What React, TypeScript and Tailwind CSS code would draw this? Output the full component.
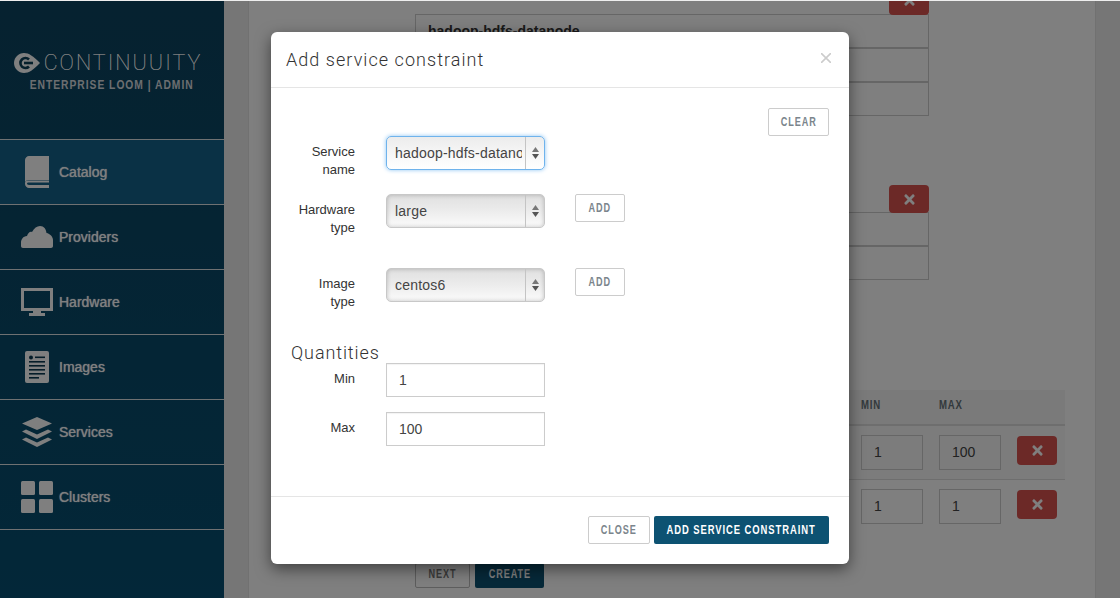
import React from "react";
import { FaTimes } from "react-icons/fa";

const sans = "font-['Liberation_Sans',Arial,sans-serif]";
const narrow = "font-['Liberation_Sans',Arial,sans-serif] font-bold";

const Nar = ({ children, cls = "scale-x-[0.76]" }: { children: React.ReactNode; cls?: string }) => (
  <span className={`inline-block whitespace-nowrap shrink-0 ${cls}`}>{children}</span>
);

const Book = () => (
  <svg width="24" height="32" viewBox="0 0 24 32" fill="#fff">
    <path d="M4 0H24V24H4C2 24 0 25 0 27V4C0 2 2 0 4 0Z" />
    <path d="M0 27C0 25 2 24.5 4 24.5H24V26.5H4C2.5 26.5 2 27 2 27.5S2.5 29 4 29H24V32H4C2 32 0 30 0 28Z" />
  </svg>
);
const Cloud = () => (
  <svg width="32" height="22" viewBox="0 0 32 22" fill="#fff">
    <path d="M2 22C0.8 22 0 21 0 20V16C0 14 2 10 6 10C7 7 9 5 11 6C13 2 16 0 19 0C23 0 25 3 25.5 7C29 7.5 32 11 32 14V20C32 21 31 22 30 22Z" />
  </svg>
);
const Monitor = () => (
  <svg width="32" height="28" viewBox="0 0 32 28" fill="#fff">
    <path fillRule="evenodd" d="M0 0H32V23H0ZM3 3V20H29V3Z" />
    <path d="M12 23H20V25H24V28H8V25H12Z" />
  </svg>
);
const Doc = () => (
  <svg width="24" height="32" viewBox="0 0 24 32">
    <rect width="24" height="32" rx="2" fill="#fff" />
    <g fill="#0a3a52">
      <circle cx="6" cy="6.5" r="2" />
      <rect x="10" y="5.5" width="10" height="1.6" />
      <rect x="4" y="10" width="16" height="1.6" />
      <rect x="4" y="14" width="16" height="1.6" />
      <rect x="4" y="18" width="16" height="1.6" />
      <rect x="4" y="22" width="16" height="1.6" />
      <rect x="4" y="26" width="10" height="1.6" />
    </g>
  </svg>
);
const Layers = () => (
  <svg width="30" height="30" viewBox="0 0 30 30" fill="#fff">
    <path d="M15 0L30 6.500L15 13L0 6.500Z" />
    <path d="M4 12.500L15 17.500L26 12.500L30 14.500L15 22L0 14.500Z" />
    <path d="M4 20.500L15 25.500L26 20.500L30 22.500L15 30L0 22.500Z" />
  </svg>
);
const Grid = () => (
  <svg width="32" height="32" viewBox="0 0 32 32" fill="#fff">
    <rect width="14" height="14" rx="1.5" />
    <rect x="18" width="14" height="14" rx="1.5" />
    <rect y="18" width="14" height="14" rx="1.5" />
    <rect x="18" y="18" width="14" height="14" rx="1.5" />
  </svg>
);
const Logo = () => (
  <svg width="26" height="20" viewBox="0 0 26 20">
    <path fill="#fff" d="M10 0C15 0 19 3 26 10C19 17 15 20 10 20C4.500 20 0 15.500 0 10S4.500 0 10 0Z" />
    <path fill="none" stroke="#0c4058" strokeWidth="2.600" d="M15 6.500A5 5 0 1 0 15 13.500" />
    <path stroke="#0c4058" strokeWidth="2.600" d="M10 10H19" />
  </svg>
);

const nav: [string, React.ReactNode, boolean][] = [
  ["Catalog", <Book />, true],
  ["Providers", <Cloud />, false],
  ["Hardware", <Monitor />, false],
  ["Images", <Doc />, false],
  ["Services", <Layers />, false],
  ["Clusters", <Grid />, false],
];

function Sidebar() {
  return (
    <aside className="w-[224px] shrink-0 flex flex-col bg-gradient-to-b from-[#0c4460] to-[#064f72]">
      <div className="h-[138px] flex flex-col items-center pt-[51px]">
        <div className="flex items-center gap-[4px] pr-[8px] h-[22px]">
          <Logo />
          <span className="font-['Roboto',sans-serif] font-thin text-[21.500px] leading-[22px] tracking-[2px] text-white [text-shadow:0_0_0.6px_#fff]">CONTINUUITY</span>
        </div>
        <div className={`${narrow} mt-[1px] w-full flex justify-center text-[13px] leading-[20px] tracking-[1.250px] text-[#d9dde0]`}>
          <Nar cls="scale-x-[0.79]">ENTERPRISE LOOM | ADMIN</Nar>
        </div>
      </div>
      <nav className="border-t border-[#dfe3e5]">
        {nav.map(([label, icon, active]) => (
          <div key={label} className={`h-[65px] flex items-center border-b border-[#dfe3e5] ${active ? "bg-[#14628a]" : ""}`}>
            <div className="w-[59px] pl-[21px] pr-[6px] flex justify-center shrink-0 box-border">{icon}</div>
            <span className={`${sans} text-[14px] font-normal text-white [text-shadow:0_0_1px_#fff]`}>{label}</span>
          </div>
        ))}
      </nav>
    </aside>
  );
}

const DelBtn = ({ cls = "h-[29px]" }: { cls?: string }) => (
  <div className={`w-[40px] rounded-[4px] bg-[#d9534f] flex items-center justify-center text-white text-[15px] ${cls}`}>
    <FaTimes />
  </div>
);

const BoxRow = ({ children }: { children?: React.ReactNode }) => (
  <div className={`${sans} h-[34px] border border-[#ccc] pl-[12px] text-[14px] font-bold leading-[32px] text-[#333]`}>{children}</div>
);

const SmallInput = ({ value }: { value: string }) => (
  <div className={`${sans} w-[62px] h-[35px] border border-[#ccc] pl-[12px] text-[14px] leading-[33px] text-[#444]`}>{value}</div>
);

function TableRow({ min, max, cls }: { min: string; max: string; cls: string }) {
  return (
    <div className={`flex justify-end gap-[16px] pr-[8px] ${cls}`}>
      <SmallInput value={min} />
      <SmallInput value={max} />
      <DelBtn cls="h-[29px] mt-[1px]" />
    </div>
  );
}

function Main() {
  return (
    <main className="flex-1 bg-[#ededed] px-[24px] min-w-0">
      <div className="bg-white border-x border-[#e2e2e2] h-full pl-[166px] pr-[30px] overflow-hidden">
        <div className="w-[514px]">
          <div className="flex justify-end -mt-[15px] -mb-[1px]">
            <DelBtn />
          </div>
          <BoxRow>hadoop-hdfs-datanode</BoxRow>
          <BoxRow />
          <BoxRow />
          <div className="flex justify-end mt-[69px] -mb-[1px]">
            <DelBtn cls="h-[28px]" />
          </div>
          <BoxRow />
          <BoxRow />
        </div>
        <div className={`${narrow} mt-[110px] h-[36px] flex gap-[16px] justify-end pr-[8px] bg-[#f5f5f5] border-b-2 border-[#ddd] text-[12px] tracking-[1px] leading-[30px] text-[#66727a]`}>
          <span className="w-[62px]"><Nar cls="scale-x-[0.8] origin-left">MIN</Nar></span>
          <span className="w-[62px]"><Nar cls="scale-x-[0.8] origin-left">MAX</Nar></span>
          <span className="w-[40px]" />
        </div>
        <TableRow min="1" max="100" cls="h-[54px] pt-[9px] bg-[#f9f9f9] border-b border-[#ddd]" />
        <TableRow min="1" max="1" cls="h-[83px] pt-[9px]" />
        <div className={`${narrow} flex gap-[5px] text-[12px] tracking-[1.200px]`}>
          <div className="w-[55px] h-[25px] pb-[3px] border border-[#bbb] rounded-[2px] text-[#777] flex items-center justify-center"><Nar>NEXT</Nar></div>
          <div className="w-[69px] h-[25px] pb-[3px] bg-[#0d5272] rounded-[2px] text-white flex items-center justify-center"><Nar>CREATE</Nar></div>
        </div>
      </div>
    </main>
  );
}

const Label = ({ children }: { children: React.ReactNode }) => (
  <div className={`${sans} w-[64px] h-[34px] pt-[7px] text-right text-[13px] leading-[18px] text-[#333] shrink-0`}>{children}</div>
);

const Btn = ({ w, children }: { w: string; children: React.ReactNode }) => (
  <div className={`${narrow} ${w} h-[28px] border border-[#ccc] rounded-[2px] bg-white text-[#7b858c] text-[12px] tracking-[1.200px] flex items-center justify-center`}>
    <Nar>{children}</Nar>
  </div>
);

function Select({ value, focus }: { value: string; focus?: boolean }) {
  return (
    <div
      className={`${sans} relative w-[159px] h-[34px] rounded-[5px] border shrink-0 bg-gradient-to-b ${
        focus
          ? "border-[#6fb3ec] from-[#ececec] via-[#f6f6f6] to-white shadow-[0_0_4px_#8dc4f2]"
          : "border-[#c8c8c8] from-[#e0e0e0] via-[#ececec] to-[#fbfbfb] shadow-[inset_0_0_4px_rgba(0,0,0,0.22)]"
      }`}
    >
      <div className="absolute left-[8px] top-0 w-[127px] overflow-hidden whitespace-nowrap text-[14px] tracking-[0.200px] leading-[32px] text-[#444]">{value}</div>
      <div className="absolute right-0 top-0 bottom-0 w-[19px] border-l border-[#c4c4c4] flex flex-col items-center justify-center gap-[2px]">
        <svg width="7" height="5" viewBox="0 0 7 5"><path d="M3.500 0L7 5H0Z" fill="#777" /></svg>
        <svg width="7" height="5" viewBox="0 0 7 5"><path d="M3.500 5L7 0H0Z" fill="#555" /></svg>
      </div>
    </div>
  );
}

const Input = ({ value }: { value: string }) => (
  <div className={`${sans} w-[159px] h-[34px] border border-[#ccc] pl-[12px] text-[14px] leading-[32px] text-[#444] shadow-[inset_0_1px_1px_rgba(0,0,0,0.05)]`}>{value}</div>
);

const CloseX = () => (
  <svg className="-mt-[3px]" width="10" height="10" viewBox="0 0 10 10" stroke="#ccc" strokeWidth="1.600"><path d="M0 0L10 10M10 0L0 10" /></svg>
);

function Modal() {
  return (
    <div className="absolute inset-0 bg-black/50 flex justify-center items-start pt-[31px]">
      <div className="w-[578px] h-[532px] bg-white rounded-[6px] shadow-[0_5px_15px_rgba(0,0,0,0.5)] flex flex-col overflow-hidden">
        <div className="h-[56px] shrink-0 border-b border-[#e5e5e5] flex items-center justify-between pl-[15px] pr-[18px]">
          <h4 className="font-['Roboto',sans-serif] font-light text-[18px] tracking-[1.050px] text-[#333]">Add service constraint</h4>
          <CloseX />
        </div>
        <div className="flex-1 flex flex-col px-[20px] pt-[20px]">
          <div className="flex justify-end">
            <Btn w="w-[61px]">CLEAR</Btn>
          </div>
          <div className="flex gap-[31px]">
            <Label>Service<br />name</Label>
            <Select value="hadoop-hdfs-datanode" focus />
          </div>
          <div className="flex gap-[30px] mt-[24px]">
            <Label>Hardware<br />type</Label>
            <div className="ml-[1px]"><Select value="large" /></div>
            <Btn w="w-[50px]">ADD</Btn>
          </div>
          <div className="flex gap-[30px] mt-[40px]">
            <Label>Image<br />type</Label>
            <div className="ml-[1px]"><Select value="centos6" /></div>
            <Btn w="w-[50px]">ADD</Btn>
          </div>
          <div className="font-['Roboto',sans-serif] font-light text-[18px] leading-[20px] tracking-[0.900px] text-[#333] mt-[41px]">Quantities</div>
          <div className="flex gap-[31px]">
            <Label>Min</Label>
            <Input value="1" />
          </div>
          <div className="flex gap-[31px] mt-[15px]">
            <Label>Max</Label>
            <Input value="100" />
          </div>
        </div>
        <div className="h-[68px] shrink-0 border-t border-[#e5e5e5] flex justify-end gap-[4px] pt-[19px] pr-[20px]">
          <Btn w="w-[62px]">CLOSE</Btn>
          <div className={`${narrow} w-[175px] h-[28px] rounded-[2px] bg-[#0d5272] text-white text-[12px] tracking-[1.200px] flex items-center justify-center`}>
            <Nar cls="scale-x-[0.785]">ADD SERVICE CONSTRAINT</Nar>
          </div>
        </div>
      </div>
    </div>
  );
}

export default function App() {
  return (
    <div className="relative w-[1120px] h-[598px] overflow-hidden flex border-t border-[#eee]">
      <Sidebar />
      <Main />
      <Modal />
    </div>
  );
}
